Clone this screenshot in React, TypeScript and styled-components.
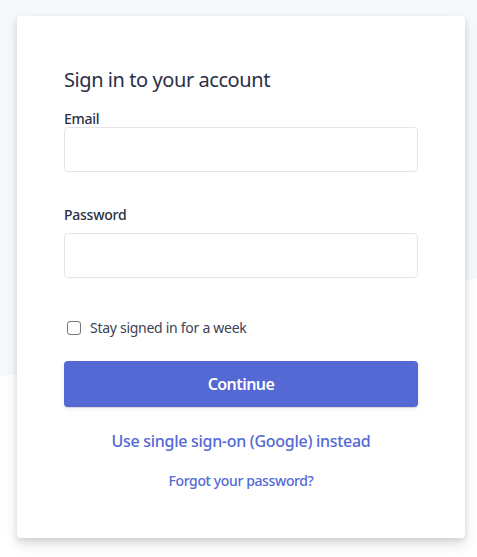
import React from "react";
import styled, { createGlobalStyle } from "styled-components";

const GlobalStyle = createGlobalStyle`
  html, body { margin: 0; padding: 0; }
  body {
    font-family: "Noto Sans", "Open Sans", "Liberation Sans", sans-serif;
    color: #1a1f36;
    -webkit-font-smoothing: antialiased;
  }
  * { box-sizing: border-box; }
`;

const Page = styled.div`
  min-height: 557px;
  padding: 16px 12px 19px 17px;
  background: linear-gradient(168.4deg, #f6f9fc 369px, #ffffff 369px);
`;

const Card = styled.form`
  width: 448px;
  background: #ffffff;
  border-radius: 4px;
  padding: 50px 47px 43px;
  box-shadow: rgba(60, 66, 87, 0.12) 0px 7px 14px 0px,
    rgba(0, 0, 0, 0.12) 0px 3px 6px 0px;
  display: flex;
  flex-direction: column;
`;

const Title = styled.h1`
  margin: 0 0 17px;
  font-size: 20px;
  line-height: 28px;
  font-weight: 400;
  letter-spacing: -0.43px;
  color: #2a2f45;
`;

const Field = styled.div<{ $gap: number; $after: number }>`
  display: flex;
  flex-direction: column;
  gap: ${(p) => p.$gap}px;
  margin-bottom: ${(p) => p.$after}px;
`;

const Label = styled.label`
  font-size: 14px;
  line-height: 16px;
  font-weight: 500;
  letter-spacing: -0.25px;
  color: #2a2f45;
`;

const Input = styled.input`
  height: 45px;
  width: 100%;
  border: 1px solid #e3e5ea;
  border-radius: 4px;
  padding: 8px 16px;
  font-size: 16px;
  font-family: inherit;
  background: #ffffff;
  outline: none;
`;

const CheckRow = styled.label`
  display: flex;
  align-items: center;
  gap: 9px;
  padding-left: 3px;
  font-size: 14px;
  line-height: 20px;
  letter-spacing: -0.28px;
  color: #3c4257;
  margin: 40px 0 23px;
`;

const Check = styled.input`
  appearance: none;
  width: 14px;
  height: 14px;
  margin: 0;
  border: 1px solid #767676;
  border-radius: 3px;
  background: #ffffff;
`;

const Button = styled.button`
  height: 46px;
  width: 100%;
  border: none;
  border-radius: 4px;
  background: #5469d4;
  color: #ffffff;
  font-family: inherit;
  font-size: 16px;
  font-weight: 600;
  letter-spacing: -0.55px;
  box-shadow: rgba(0, 0, 0, 0.12) 0px 1px 1px 0px,
    rgba(60, 66, 87, 0.08) 0px 2px 5px 0px;
  margin-bottom: 20px;
`;

const LinkText = styled.a<{ $size: number; $after: number; $spacing: number }>`
  align-self: center;
  font-size: ${(p) => p.$size}px;
  line-height: 28px;
  font-weight: 500;
  letter-spacing: ${(p) => p.$spacing}px;
  color: #5469d4;
  text-decoration: none;
  margin-bottom: ${(p) => p.$after}px;
`;

export default function App() {
  return (
    <>
      <GlobalStyle />
      <Page>
        <Card onSubmit={(e) => e.preventDefault()}>
          <Title>Sign in to your account</Title>
          <Field $gap={0} $after={35}>
            <Label htmlFor="email">Email</Label>
            <Input id="email" type="email" />
          </Field>
          <Field $gap={10} $after={0}>
            <Label htmlFor="password">Password</Label>
            <Input id="password" type="password" />
          </Field>
          <CheckRow>
            <Check type="checkbox" />
            Stay signed in for a week
          </CheckRow>
          <Button type="submit">Continue</Button>
          <LinkText href="#" $size={16} $after={12} $spacing={-0.29}>
            Use single sign-on (Google) instead
          </LinkText>
          <LinkText href="#" $size={14} $after={0} $spacing={-0.38}>
            Forgot your password?
          </LinkText>
        </Card>
      </Page>
    </>
  );
}
